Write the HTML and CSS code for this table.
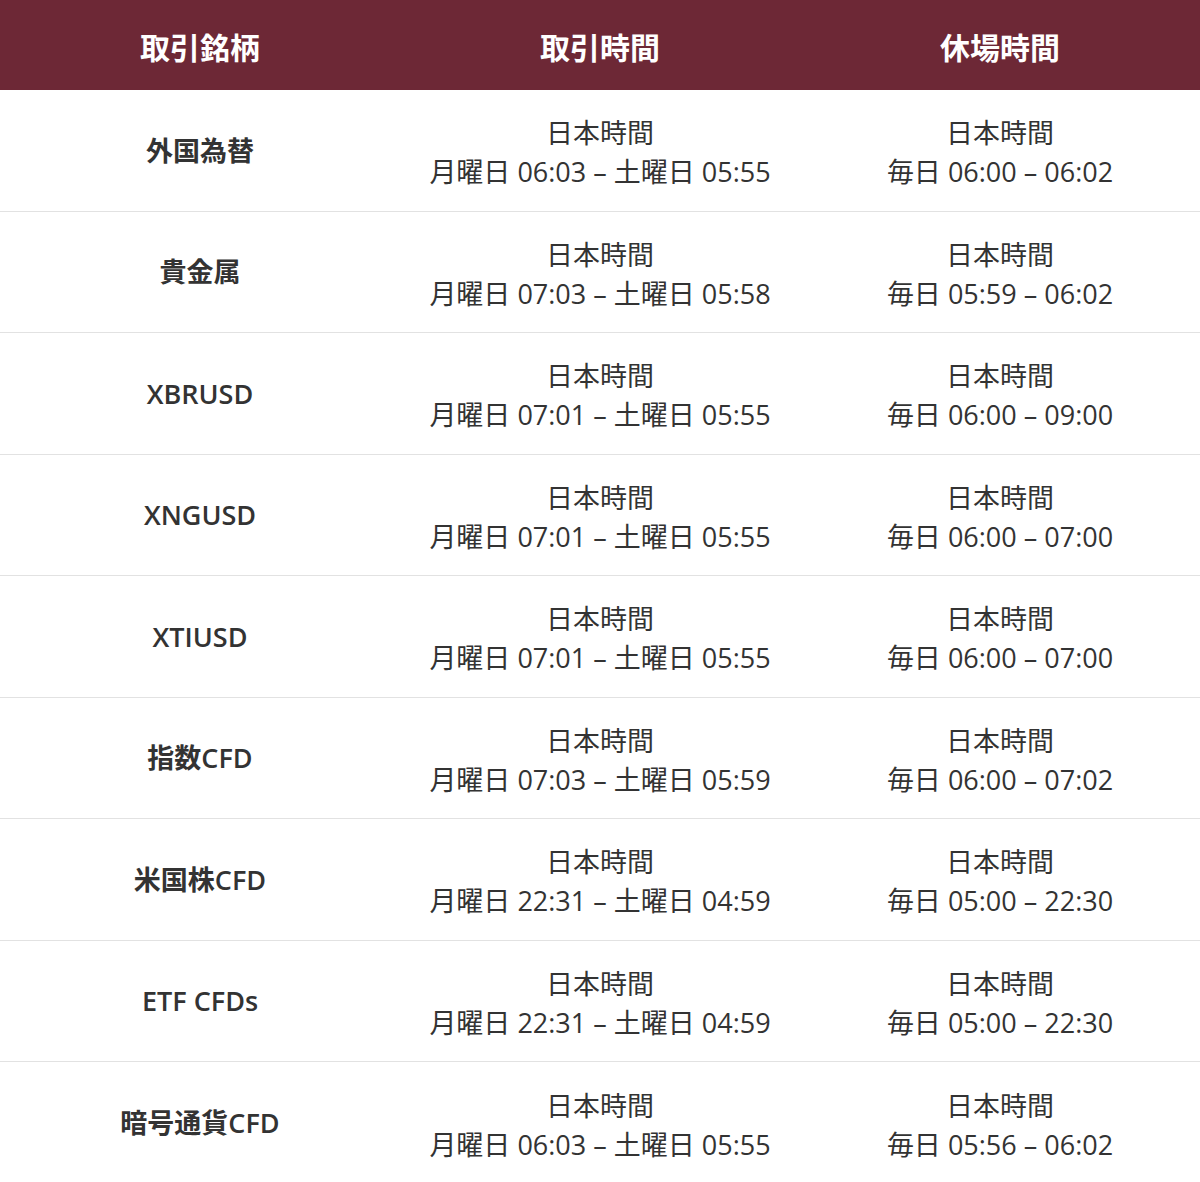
FILE: index.html
```html
<!DOCTYPE html>
<html lang="ja">
<head>
<meta charset="utf-8">
<link rel="stylesheet" href="styles.css">
</head>
<body>
<div class="table">
  <div class="head">
    <div class="cell">取引銘柄</div>
    <div class="cell">取引時間</div>
    <div class="cell">休場時間</div>
  </div>
  <div class="row"><div class="cell name">外国為替</div><div class="cell">日本時間<br>月曜日 06:03 – 土曜日 05:55</div><div class="cell">日本時間<br>毎日 06:00 – 06:02</div></div>
  <div class="row"><div class="cell name">貴金属</div><div class="cell">日本時間<br>月曜日 07:03 – 土曜日 05:58</div><div class="cell">日本時間<br>毎日 05:59 – 06:02</div></div>
  <div class="row"><div class="cell name">XBRUSD</div><div class="cell">日本時間<br>月曜日 07:01 – 土曜日 05:55</div><div class="cell">日本時間<br>毎日 06:00 – 09:00</div></div>
  <div class="row"><div class="cell name">XNGUSD</div><div class="cell">日本時間<br>月曜日 07:01 – 土曜日 05:55</div><div class="cell">日本時間<br>毎日 06:00 – 07:00</div></div>
  <div class="row"><div class="cell name">XTIUSD</div><div class="cell">日本時間<br>月曜日 07:01 – 土曜日 05:55</div><div class="cell">日本時間<br>毎日 06:00 – 07:00</div></div>
  <div class="row"><div class="cell name">指数CFD</div><div class="cell">日本時間<br>月曜日 07:03 – 土曜日 05:59</div><div class="cell">日本時間<br>毎日 06:00 – 07:02</div></div>
  <div class="row"><div class="cell name">米国株CFD</div><div class="cell">日本時間<br>月曜日 22:31 – 土曜日 04:59</div><div class="cell">日本時間<br>毎日 05:00 – 22:30</div></div>
  <div class="row"><div class="cell name">ETF CFDs</div><div class="cell">日本時間<br>月曜日 22:31 – 土曜日 04:59</div><div class="cell">日本時間<br>毎日 05:00 – 22:30</div></div>
  <div class="row last"><div class="cell name">暗号通貨CFD</div><div class="cell">日本時間<br>月曜日 06:03 – 土曜日 05:55</div><div class="cell">日本時間<br>毎日 05:56 – 06:02</div></div>
</div>
</body>
</html>
```
FILE: styles.css
```css
html, body {
  margin: 0;
  padding: 0;
  background: #ffffff;
}
body {
  font-family: "Open Sans", "Noto Sans CJK JP", sans-serif;
  color: #333333;
  width: 1200px;
}
.table {
  display: flex;
  flex-direction: column;
}
.head, .row {
  display: grid;
  grid-template-columns: 400px 400px 400px;
}
.head {
  background: #6d2836;
  color: #ffffff;
  height: 90px;
  padding-top: 2px;
  box-sizing: border-box;
  font-weight: 700;
  font-size: 30px;
}
.row {
  height: 121.5px;
  box-sizing: border-box;
  padding-top: 4px;
  border-bottom: 1.5px solid #e2e2e2;
  font-size: 27px;
  line-height: 39px;
}
.row.last {
  border-bottom: none;
}
.cell {
  display: flex;
  align-items: center;
  justify-content: center;
  text-align: center;
}
.name {
  font-weight: 600;
  font-size: 27px;
  padding-bottom: 4px;
}
```
